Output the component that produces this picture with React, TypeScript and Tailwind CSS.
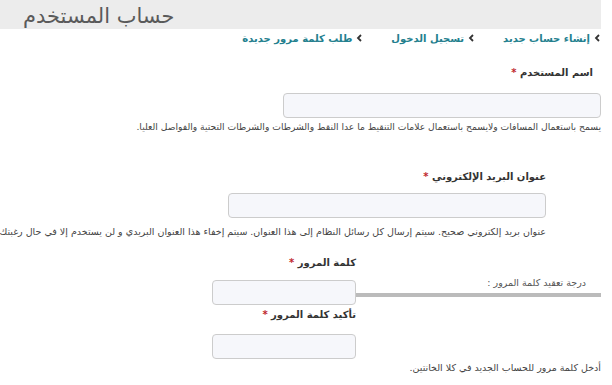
export default function App() {
  return (
    <div dir="rtl" className="relative w-[612px] h-[385px] overflow-hidden bg-white pr-[11px] font-['DejaVu_Sans',sans-serif] text-[#333]">
      {/* Header */}
      <div className="h-[29px] bg-[#ececec] flex items-center justify-end pl-[23px]">
        <h1 className="text-[21px] leading-none text-[#5a5a5a] font-normal pt-[3px]">حساب المستخدم</h1>
      </div>

      {/* Tabs */}
      <div className="flex items-center gap-[28px] h-[18px] text-[10px] font-bold text-[#23808e]">
        <Tab label="إنشاء حساب جديد" />
        <Tab label="تسجيل الدخول" />
        <Tab label="طلب كلمة مرور جديدة" />
      </div>

      {/* Username */}
      <div className="mt-[18px]">
        <Label text="اسم المستخدم" className="pr-[8px]" />
        <input className="mt-[12px] block w-[318px] h-[25px] rounded-[4px] border border-[#ccc] bg-[#f6f7fb]" />
        <p className="mt-[2px] text-[9.2px] leading-[14px] text-[#444] whitespace-nowrap">
          يسمح باستعمال المسافات ولايسمح باستعمال علامات التنقيط ما عدا النقط والشرطات والشرطات التحتية والفواصل العليا.
        </p>
      </div>

      {/* Email */}
      <div className="mt-[35px] mr-[55px]">
        <Label text="عنوان البريد الإلكتروني" />
        <input className="mt-[8px] block w-[318px] h-[25px] rounded-[4px] border border-[#ccc] bg-[#f6f7fb]" />
        <p className="mt-[7px] text-[9.5px] leading-[14px] text-[#444] whitespace-nowrap">
          عنوان بريد إلكتروني صحيح. سيتم إرسال كل رسائل النظام إلى هذا العنوان. سيتم إخفاء هذا العنوان البريدي و لن يستخدم إلا في حال رغبتك في استلام أخبار أو تنبيهات عبر البريد.
        </p>
      </div>

      {/* Password */}
      <div className="mt-[16px] flex items-start">
        <div className="w-[245px] shrink-0 pt-[21px]">
          <p className="text-[9.5px] leading-[14px] text-[#555] pr-[15px]">درجة تعقيد كلمة المرور :</p>
          <div className="mt-[3px] h-[4px] bg-[#bbb]" />
        </div>
        <div className="w-[144px] shrink-0">
          <Label text="كلمة المرور" />
          <input type="password" className="mt-[9px] block w-[144px] h-[25px] rounded-[4px] border border-[#ccc] bg-[#f6f7fb]" />
          <Label text="تأكيد كلمة المرور" className="mt-[2px]" />
          <input type="password" className="mt-[11px] block w-[144px] h-[25px] rounded-[4px] border border-[#ccc] bg-[#f6f7fb]" />
        </div>
      </div>
      <p className="mt-[2px] text-[9.5px] leading-[14px] text-[#444]">أدخل كلمة مرور للحساب الجديد في كلا الخانتين.</p>
    </div>
  );
}

function Tab({ label }: { label: string }) {
  return (
    <div className="flex items-center gap-[4px]">
      <svg width="7" height="8" viewBox="0 0 7 8" className="shrink-0">
        <path d="M5 1 L2 4 L5 7" fill="none" stroke="#333" strokeWidth="1.8" />
      </svg>
      <span className="whitespace-nowrap">{label}</span>
    </div>
  );
}

function Label({ text, className = "" }: { text: string; className?: string }) {
  return (
    <div className={`text-[10px] leading-[16px] font-bold text-[#333] ${className}`}>
      {text} <span className="text-[#c0272d]">*</span>
    </div>
  );
}
